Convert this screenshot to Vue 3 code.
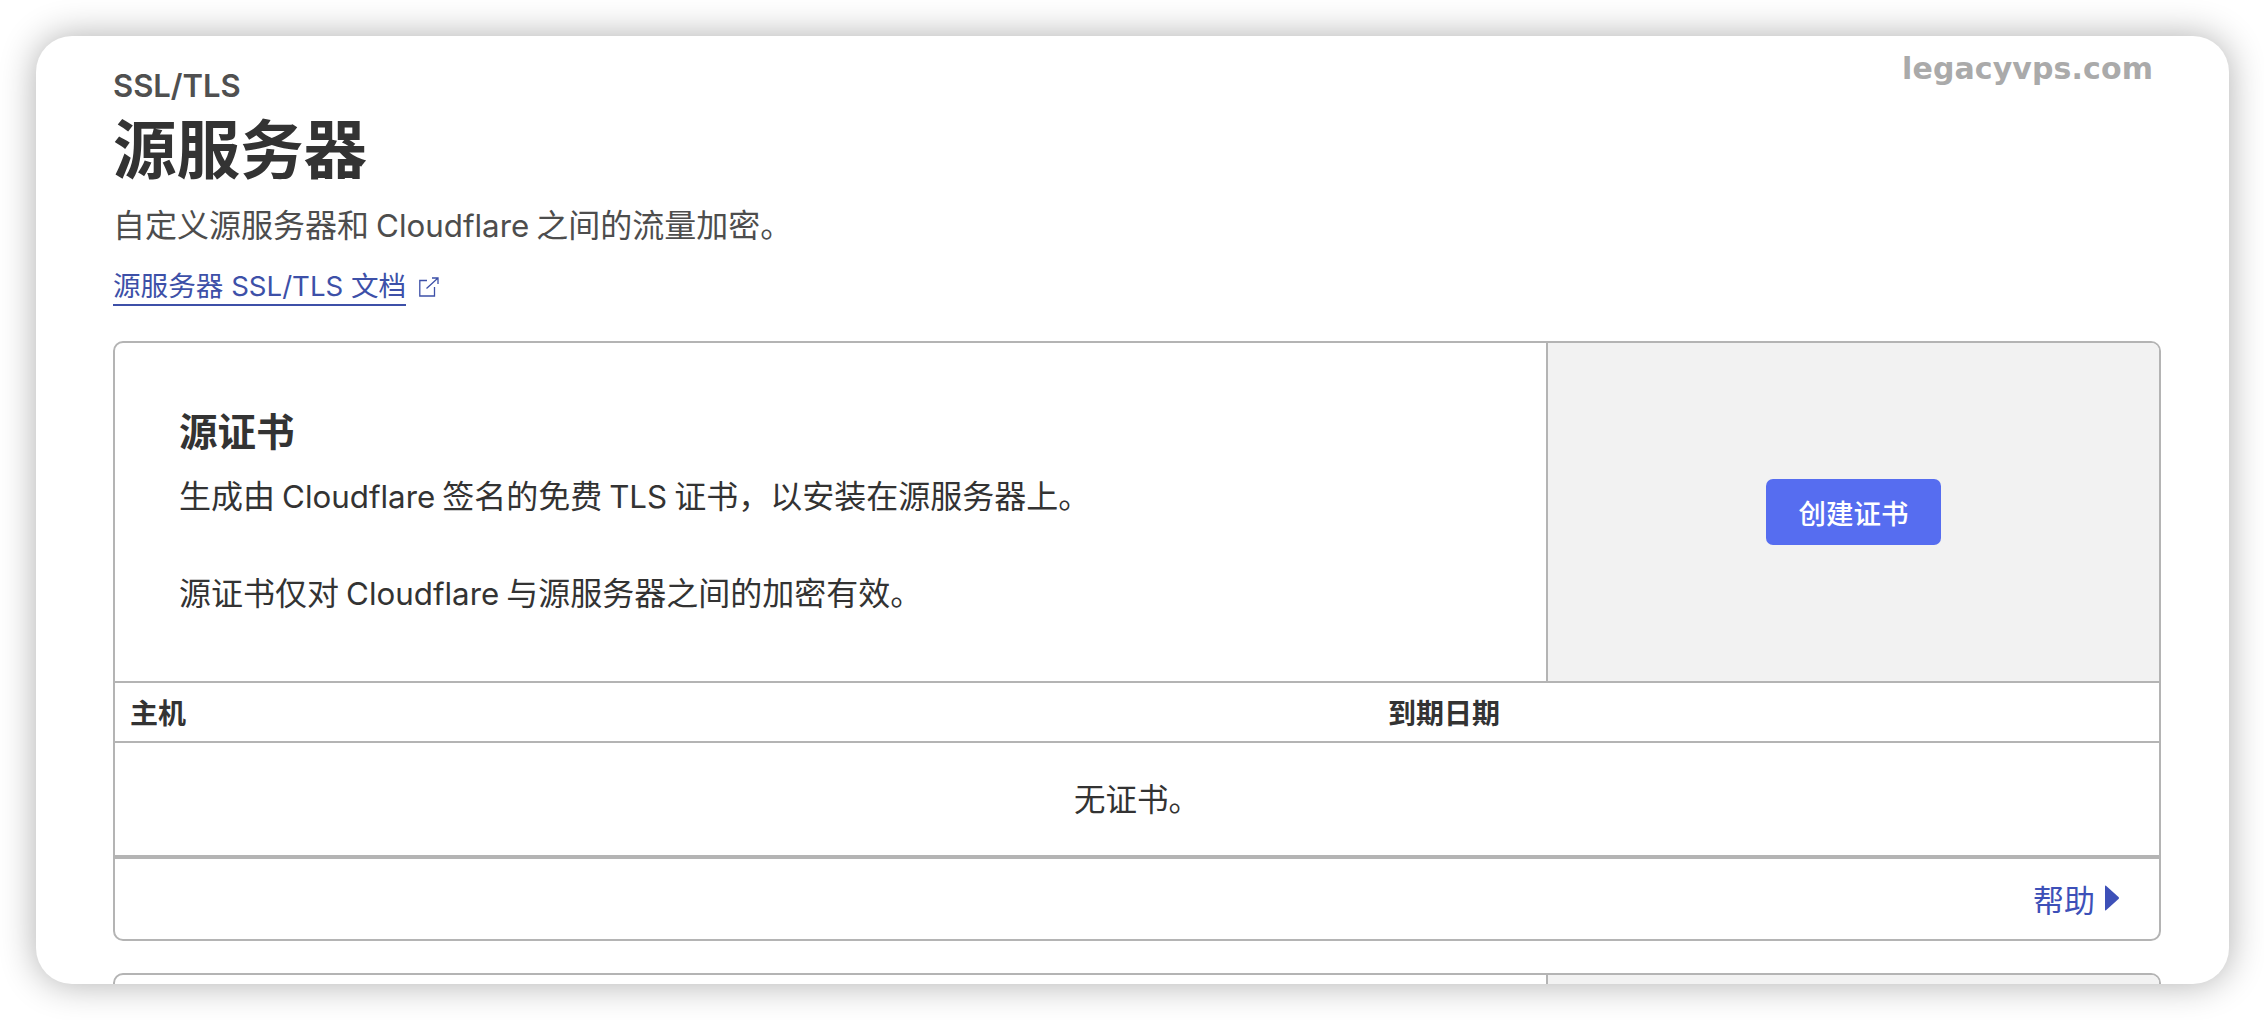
<script setup>
const cols = ['主机', '到期日期']
</script>

<template>
  <div class="page">
    <main class="window">
      <div class="watermark">legacyvps.com</div>
      <header class="head">
        <div class="crumb">SSL/TLS</div>
        <h1 class="title">源服务器</h1>
        <p class="sub">自定义源服务器和 <span class="en">Cloudflare</span> 之间的流量加密。</p>
        <div class="doc">
          <a class="doclink">源服务器 SSL/TLS 文档</a>
          <svg class="ext" viewBox="0 0 20 20" fill="none" stroke="#3d50a8" stroke-width="1.3">
            <path d="M8 3.5H.8v15.5H15.5V10" />
            <path d="M7.5 11.5 19 1M13 1h6v6" />
          </svg>
        </div>
      </header>

      <section class="card">
        <div class="top">
          <div class="info">
            <h2 class="h2">源证书</h2>
            <p class="line">生成由 <span class="en">Cloudflare</span> 签名的免费 <span class="en">TLS</span> 证书，以安装在源服务器上。</p>
            <p class="line second">源证书仅对 <span class="en">Cloudflare</span> 与源服务器之间的加密有效。</p>
          </div>
          <div class="action"><button class="btn">创建证书</button></div>
        </div>
        <div class="thead">
          <div class="th host">{{ cols[0] }}</div>
          <div class="th">{{ cols[1] }}</div>
        </div>
        <div class="empty">无证书。</div>
        <div class="foot">
          <span class="help">帮助</span>
          <svg class="tri" viewBox="0 0 14 26"><path d="M0 1.5Q0 0 1 .8L13.5 12q1 1 0 2L1 25.2Q0 26 0 24.5Z" fill="#3d50b8" /></svg>
        </div>
      </section>

      <section class="card next">
        <div class="top short">
          <div class="info"></div>
          <div class="action"></div>
        </div>
      </section>
    </main>
  </div>
</template>

<style>
html, body { margin: 0; background: #fff; }
</style>

<style scoped>
.page {
  width: 2264px;
  height: 1020px;
  padding: 36px 35px 36px 36px;
  box-sizing: border-box;
  background: #fff;
  overflow: hidden;
  font-family: Inter, "Noto Sans CJK SC", sans-serif;
}
.window {
  position: relative;
  height: 948px;
  padding: 0 68px 0 77px;
  box-sizing: border-box;
  background: #fff;
  border-radius: 36px;
  box-shadow: 0 0 36px rgba(0, 0, 0, .32);
  overflow: hidden;
}
.watermark {
  position: absolute;
  top: 15px;
  right: 76px;
  font: 700 30px "DejaVu Sans", sans-serif;
  letter-spacing: .1px;
  color: #aaa;
}
.en { font-size: 31.3px; }
.head { padding-top: 32px; }
.crumb { font-size: 31px; line-height: 36px; font-weight: 600; color: #505050; }
.title { margin: 7px 0 0; font-size: 63.5px; line-height: 78px; font-weight: 600; color: #333; }
.sub { margin: 15px 0 0; font-size: 32px; word-spacing: -2px; line-height: 44px; color: #4d4d4d; }
.doc { display: flex; align-items: flex-start; margin-top: 21px; height: 72px; }
.doclink {
  font-size: 27.6px;
  line-height: 35px;
  color: #3d50a8;
  border-bottom: 2px solid #3d50a8;
}
.ext { width: 20px; height: 20px; margin: 8px 0 0 13px; }
.card {
  border: 2px solid #b4b4b4;
  border-radius: 10px;
  overflow: hidden;
  color: #333;
}
.top { display: flex; height: 338px; border-bottom: 2px solid #b4b4b4; }
.info { flex: 1; padding: 64px 64px 0; }
.h2 { margin: 0; font-size: 38.5px; line-height: 50px; font-weight: 600; }
.line { margin: 18px 0 0; font-size: 32px; word-spacing: -2px; line-height: 44px; }
.second { margin-top: 53px; }
.action {
  width: 613px;
  display: flex;
  align-items: center;
  justify-content: center;
  background: #f2f2f2;
  border-left: 2px solid #b4b4b4;
  box-sizing: border-box;
}
.btn {
  width: 175px;
  height: 66px;
  padding: 0;
  border: 0;
  border-radius: 7px;
  background: #566df0;
  color: #fff;
  font: 500 27.5px Inter, "Noto Sans CJK SC", sans-serif;
}
.thead {
  display: flex;
  height: 58px;
  align-items: center;
  border-bottom: 2px solid #b4b4b4;
  font-size: 28px;
  font-weight: 600;
}
.th.host { width: 1273px; padding-left: 15px; box-sizing: border-box; }
.empty {
  height: 108px;
  padding-bottom: 4px;
  border-bottom: 4px solid #b4b4b4;
  display: flex;
  align-items: center;
  justify-content: center;
  font-size: 31.5px;
}
.foot {
  height: 78px;
  padding: 0 40px 2px 0;
  display: flex;
  align-items: center;
  justify-content: flex-end;
  color: #3d50b8;
  font-size: 31px;
}
.tri { width: 14px; height: 26px; margin-left: 10px; }
.next { margin-top: 32px; }
.short { height: 200px; border-bottom: 0; }
</style>
